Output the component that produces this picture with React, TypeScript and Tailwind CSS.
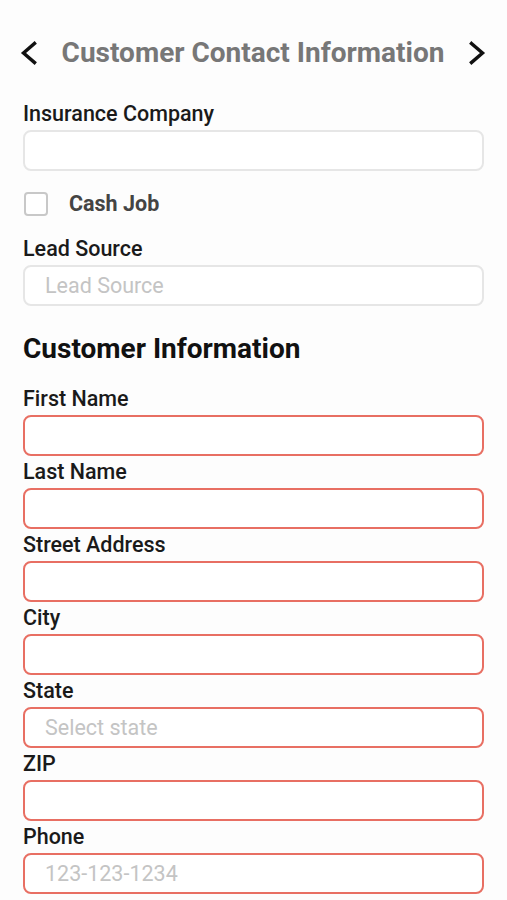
import React from "react";

const Chevron = ({ dir }: { dir: "left" | "right" }) => (
  <svg width="18" height="26" viewBox="0 0 18 26" fill="none" stroke="#111" strokeWidth="3.4" strokeLinecap="square">
    {dir === "left" ? <path d="M14.5 3.5 L3.5 13 L14.5 22.5" /> : <path d="M3.5 3.5 L14.5 13 L3.5 22.5" />}
  </svg>
);

interface FieldProps {
  label: string;
  placeholder?: string;
  required?: boolean;
}

const Field = ({ label, placeholder, required }: FieldProps) => (
  <div className="flex flex-col">
    <label className="text-[21.5px] leading-[24px] font-medium text-[#1a1a1a] mb-1">{label}</label>
    <input
      readOnly
      placeholder={placeholder}
      className={
        "h-[41px] w-full rounded-[8px] bg-white px-[20px] text-[21.5px] outline-none placeholder:text-[#c4c4c4] " +
        (required ? "border-2 border-[#e86f63]" : "border-2 border-[#e6e6e6]")
      }
    />
  </div>
);

export default function App() {
  const customerFields: FieldProps[] = [
    { label: "First Name" },
    { label: "Last Name" },
    { label: "Street Address" },
    { label: "City" },
    { label: "State", placeholder: "Select state" },
    { label: "ZIP" },
    { label: "Phone", placeholder: "123-123-1234" },
  ];

  return (
    <div className="min-h-[900px] w-[507px] bg-[#fdfdfd] px-[23px] pt-[35px] font-['Roboto',sans-serif]">
      {/* Header */}
      <div className="-ml-[3px] -mr-[2px] flex h-9 items-center justify-between">
        <Chevron dir="left" />
        <h1 className="text-[28px] leading-9 font-bold text-[#777]">Customer Contact Information</h1>
        <Chevron dir="right" />
      </div>

      <div className="mt-[31px]">
        <label className="block text-[21.5px] leading-[24px] font-medium text-[#1a1a1a] mb-1">Insurance Company</label>
        <input readOnly className="h-[41px] w-full rounded-[8px] border-2 border-[#e6e6e6] bg-white outline-none" />
      </div>

      <div className="mt-[21px] flex items-center">
        <div className="ml-[1px] h-6 w-6 rounded-[4px] border-2 border-[#c8c8c8] bg-white" />
        <span className="ml-[21px] text-[21.5px] leading-6 font-bold text-[#444]">Cash Job</span>
      </div>

      <div className="mt-[21px]">
        <Field label="Lead Source" placeholder="Lead Source" />
      </div>

      <h2 className="mt-[27px] text-[28px] leading-8 font-bold text-[#111]">Customer Information</h2>

      <div className="mt-[22px] flex flex-col gap-1">
        {customerFields.map((f) => (
          <Field key={f.label} {...f} required />
        ))}
      </div>
    </div>
  );
}
